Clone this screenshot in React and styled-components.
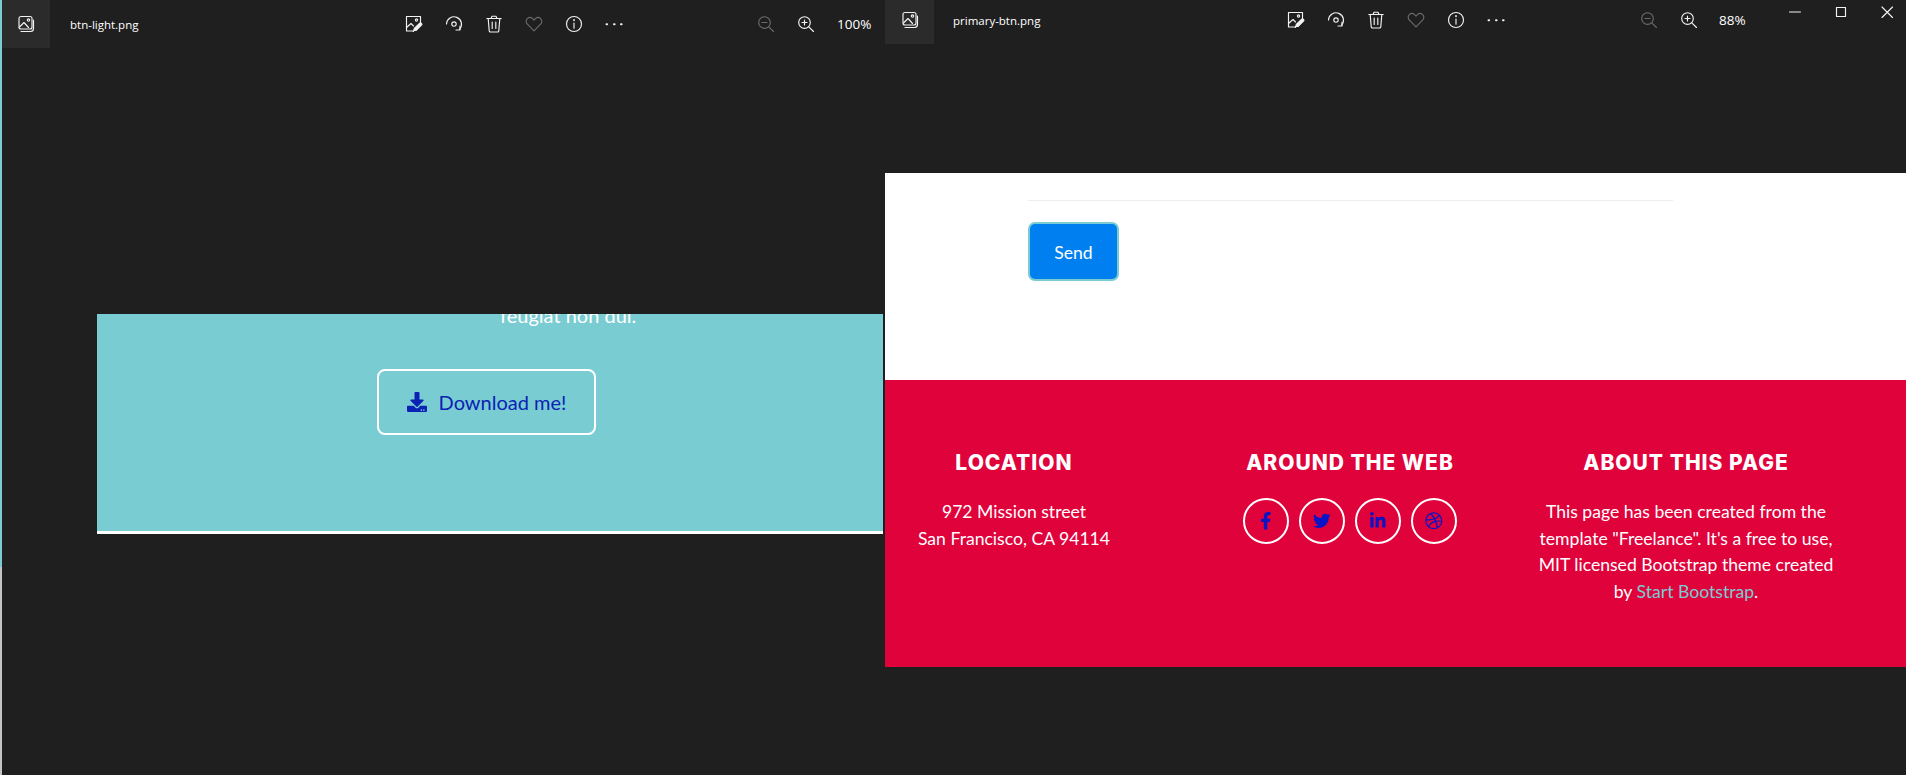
import React from "react";
import styled, { createGlobalStyle } from "styled-components";
import { FaDownload, FaFacebookF, FaTwitter, FaLinkedinIn, FaDribbble } from "react-icons/fa";

const GlobalStyle = createGlobalStyle`
  html, body {
    margin: 0;
    padding: 0;
    background: #1f1f1f;
    overflow: hidden;
  }
`;

const Desktop = styled.div`
  display: flex;
  width: 1906px;
  height: 775px;
  background: #1f1f1f;
  overflow: hidden;
`;

const AccentEdge = styled.div`
  flex: none;
  width: 2px;
  background: linear-gradient(#79cdd2 567px, #c4c4c4 567px);
`;

const LeftWindow = styled.section`
  flex: none;
  width: 881px;
  display: flex;
  flex-direction: column;
`;

const RightWindow = styled.section`
  flex: none;
  width: 1021px;
  margin-left: 2px;
  display: flex;
  flex-direction: column;
`;

const Toolbar = styled.header`
  flex: none;
  display: flex;
  align-items: center;
  height: ${p => p.$height}px;
  color: #fff;
  font-family: "Open Sans", "Noto Sans", sans-serif;
  font-size: 11.5px;
`;

const Tile = styled.div`
  flex: none;
  align-self: flex-start;
  box-sizing: border-box;
  width: ${p => p.$width}px;
  height: ${p => p.$height}px;
  padding-bottom: ${p => p.$inset || 0}px;
  background: #2b2b2b;
  display: flex;
  align-items: center;
  justify-content: center;
`;

const FileName = styled.span`
  flex: none;
  width: ${p => p.$width}px;
  margin-left: ${p => p.$left}px;
`;

const IconGroup = styled.div`
  flex: none;
  display: flex;
  align-items: center;
  gap: ${p => p.$gap}px;
  margin-left: ${p => p.$left}px;
`;

const Zoom = styled.span`
  flex: none;
  width: ${p => p.$width}px;
  margin-left: ${p => p.$left}px;
  font-size: 13.5px;
`;

const WindowControls = styled.div`
  flex: none;
  align-self: flex-start;
  display: flex;
  align-items: center;
  gap: 28px;
  margin-left: 37px;
  padding-top: 3px;
`;

const Glyph = styled.svg`
  flex: none;
  display: block;
  width: 18px;
  height: 18px;
  fill: none;
  stroke: ${p => (p.$dim ? "#6a6a6a" : "#f2f2f2")};
  stroke-width: 1.15;
  stroke-linecap: round;
  stroke-linejoin: round;
`;

const Stage = styled.div`
  flex: 1;
  min-height: 0;
  display: flex;
  flex-direction: column;
`;

const TealPanel = styled.div`
  margin: 266px 0 0 95px;
  height: 217px;
  background: #79cdd2;
  border-bottom: 3px solid #fff;
  box-sizing: content-box;
  display: flex;
  flex-direction: column;
  font-family: Lato, sans-serif;
`;

const CutLine = styled.div`
  height: 14px;
  overflow: hidden;
  padding-left: 403px;
  color: #fff;
  font-size: 20px;
  line-height: 24px;

  span {
    display: block;
    margin-top: -11px;
  }
`;

const DownloadButton = styled.button`
  align-self: flex-start;
  margin: 41px 0 0 280px;
  width: 219px;
  height: 66px;
  box-sizing: border-box;
  display: flex;
  align-items: center;
  justify-content: center;
  gap: 12px;
  background: transparent;
  border: 2px solid #fff;
  border-radius: 8px;
  color: #0b22b4;
  font-family: Lato, sans-serif;
  font-size: 20px;

  svg {
    width: 20px;
    height: 20px;
  }
`;

const WhiteSection = styled.div`
  margin-top: 133px;
  height: 207px;
  background: #fff;
  padding: 27px 0 0 143px;
  box-sizing: border-box;
`;

const FieldRule = styled.div`
  width: 645px;
  height: 1px;
  background: #eceef0;
`;

const SendButton = styled.button`
  display: block;
  margin-top: 21px;
  width: 91px;
  height: 59px;
  box-sizing: border-box;
  padding-top: 3px;
  background: #0080f0;
  border: 2px solid #7accd3;
  border-radius: 7px;
  color: #fff;
  font-family: Lato, sans-serif;
  font-size: 17.6px;
`;

const Footer = styled.footer`
  height: 287px;
  background: #e0023b;
  box-sizing: border-box;
  padding-top: 70px;
  overflow: hidden;
  color: #fff;
  font-family: Lato, sans-serif;
  font-size: 17.6px;
  line-height: 26.6px;
  text-align: center;
`;

// the page behind the screenshot is wider than the window, its first column is cut by the left edge
const FooterGrid = styled.div`
  display: grid;
  grid-template-columns: repeat(3, 336px);
  margin-left: -39px;
`;

const Column = styled.div`
  display: flex;
  flex-direction: column;
  align-items: center;
`;

const Heading = styled.h4`
  margin: 0 0 24px;
  font-family: Inter, sans-serif;
  font-size: 21px;
  font-weight: 800;
  letter-spacing: 1px;
  line-height: 25px;
  text-transform: uppercase;
`;

const FooterText = styled.p`
  margin: 0;
  max-width: 300px;
`;

const FooterLink = styled.a`
  color: #7accd3;
`;

const SocialRow = styled.div`
  display: flex;
  gap: 10px;
  margin-top: -1px;
`;

const SocialLink = styled.a`
  width: 46px;
  height: 46px;
  box-sizing: border-box;
  border: 2px solid #fff;
  border-radius: 50%;
  display: flex;
  align-items: center;
  justify-content: center;
  color: #0b14c4;
  font-size: 17.6px;
`;

const EditImageIcon = () => (
  <Glyph viewBox="0 0 18 18">
    <path d="M8 16H1.5V1.5h14V8" />
    <path d="M1.5 12.5 6 8.5l2.5 2.5" />
    <circle cx="11.5" cy="5" r="1.1" />
    <path d="m8.5 16.5.8-3 5.2-5.2c.6-.6 1.4-.5 1.9 0s.6 1.3 0 1.9l-5.2 5.2-2.7.1Z" fill="#f2f2f2" />
  </Glyph>
);

const RotateIcon = () => (
  <Glyph viewBox="0 0 18 18">
    <path d="M1.5 9A7.5 7.5 0 1 1 14.5 14.4" />
    <path d="M15 11v4h-4" />
    <circle cx="9" cy="9" r="2.2" />
  </Glyph>
);

const TrashIcon = () => (
  <Glyph viewBox="0 0 18 18">
    <path d="M1.8 3.5h14.4" />
    <path d="M6 3.5 7 1.2h4l1 2.3" />
    <path d="m3.2 3.5 1 12.2c0 .7.6 1.3 1.3 1.3h7c.7 0 1.3-.6 1.3-1.3l1-12.2" />
    <path d="M7.2 7v6.5M10.8 7v6.5" />
  </Glyph>
);

const HeartIcon = () => (
  <Glyph viewBox="0 0 18 18" $dim>
    <path d="M9 15.8 2.4 9.2C.8 7.6.8 5.2 2.3 3.7c1.5-1.4 3.8-1.4 5.3 0L9 5.1l1.4-1.4c1.5-1.4 3.8-1.4 5.3 0 1.5 1.5 1.5 3.9-.1 5.5L9 15.8Z" />
  </Glyph>
);

const InfoIcon = () => (
  <Glyph viewBox="0 0 18 18">
    <circle cx="9" cy="9" r="7.5" />
    <path d="M9 8v5.2" />
    <path d="M9 4.8v.6" strokeWidth="1.6" />
  </Glyph>
);

const DotsIcon = () => (
  <Glyph viewBox="0 0 18 18">
    <path d="M1.5 9.2h.6M9 9.2h.6M16 9.2h.6" strokeWidth="2" />
  </Glyph>
);

const ZoomOutIcon = () => (
  <Glyph viewBox="0 0 18 18" $dim>
    <circle cx="7.5" cy="7.5" r="5.8" />
    <path d="m11.8 11.8 4.7 4.7M5 7.5h5" />
  </Glyph>
);

const ZoomInIcon = () => (
  <Glyph viewBox="0 0 18 18">
    <circle cx="7.5" cy="7.5" r="5.8" />
    <path d="m11.8 11.8 4.7 4.7M5 7.5h5M7.5 5v5" />
  </Glyph>
);

const GalleryIcon = () => (
  <Glyph viewBox="0 0 18 18">
    <rect x="2" y="1.5" width="13" height="12.5" rx="2" />
    <path d="M2.5 12 7 7.5l4.5 5" />
    <circle cx="11.5" cy="5" r="1.2" />
    <path d="M4 16.5h9.5c1.5 0 3-1.2 3-3V5" />
  </Glyph>
);

const MinimizeIcon = () => (
  <Glyph viewBox="0 0 18 18">
    <path d="M3.5 9h11" />
  </Glyph>
);

const MaximizeIcon = () => (
  <Glyph viewBox="0 0 18 18">
    <rect x="4.5" y="4.5" width="9" height="9" />
  </Glyph>
);

const CloseIcon = () => (
  <Glyph viewBox="0 0 18 18">
    <path d="m4 4 10.5 10.5M14.5 4 4 14.5" />
  </Glyph>
);

const ImageActions = () => (
  <IconGroup $gap={22} $left={0}>
    <EditImageIcon />
    <RotateIcon />
    <TrashIcon />
    <HeartIcon />
    <InfoIcon />
    <DotsIcon />
  </IconGroup>
);

const App = () => (
  <Desktop>
    <GlobalStyle />
    <AccentEdge />
    <LeftWindow>
      <Toolbar $height={48}>
        <Tile $width={48} $height={48}>
          <GalleryIcon />
        </Tile>
        <FileName $left={20} $width={335}>btn-light.png</FileName>
        <ImageActions />
        <IconGroup $gap={22} $left={134}>
          <ZoomOutIcon />
          <ZoomInIcon />
        </IconGroup>
        <Zoom $left={22} $width={40}>100%</Zoom>
      </Toolbar>
      <Stage>
        <TealPanel>
          <CutLine>
            <span>feugiat non dui.</span>
          </CutLine>
          <DownloadButton>
            <FaDownload />
            Download me!
          </DownloadButton>
        </TealPanel>
      </Stage>
    </LeftWindow>
    <RightWindow>
      <Toolbar $height={40}>
        <Tile $width={49} $height={44} $inset={4}>
          <GalleryIcon />
        </Tile>
        <FileName $left={19} $width={334}>primary-btn.png</FileName>
        <ImageActions />
        <IconGroup $gap={22} $left={135}>
          <ZoomOutIcon />
          <ZoomInIcon />
        </IconGroup>
        <Zoom $left={21} $width={30}>88%</Zoom>
        <WindowControls>
          <MinimizeIcon />
          <MaximizeIcon />
          <CloseIcon />
        </WindowControls>
      </Toolbar>
      <Stage>
        <WhiteSection>
          <FieldRule />
          <SendButton>Send</SendButton>
        </WhiteSection>
        <Footer>
          <FooterGrid>
            <Column>
              <Heading>Location</Heading>
              <FooterText>
                972 Mission street
                <br />
                San Francisco, CA 94114
              </FooterText>
            </Column>
            <Column>
              <Heading>Around the Web</Heading>
              <SocialRow>
                <SocialLink><FaFacebookF /></SocialLink>
                <SocialLink><FaTwitter /></SocialLink>
                <SocialLink><FaLinkedinIn /></SocialLink>
                <SocialLink><FaDribbble /></SocialLink>
              </SocialRow>
            </Column>
            <Column>
              <Heading>About this page</Heading>
              <FooterText>
                This page has been created from the template "Freelance". It's a free to use, MIT licensed Bootstrap theme created by <FooterLink>Start Bootstrap</FooterLink>.
              </FooterText>
            </Column>
          </FooterGrid>
        </Footer>
      </Stage>
    </RightWindow>
  </Desktop>
);

export default App;
